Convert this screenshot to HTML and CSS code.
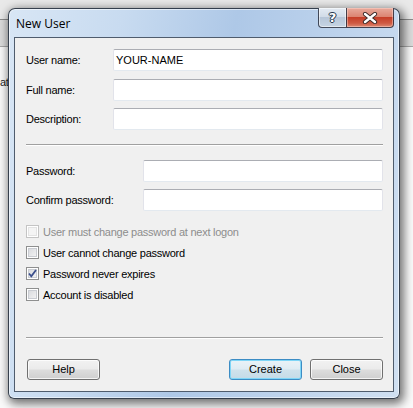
FILE: index.html
```html
<!DOCTYPE html>
<html>
<head>
<meta charset="utf-8">
<title>New User</title>
<link rel="stylesheet" href="styles.css">
</head>
<body>
<div class="desktop">
  <div class="backdrop"><span class="bg-text">at</span></div>
  <div class="dialog">
    <div class="titlebar">
      <span class="title">New User</span>
      <div class="caption-buttons">
        <div class="cap cap-help"><span class="q">?</span></div>
        <div class="cap cap-close">
          <svg width="16" height="12" viewBox="0 0 16 12">
            <path d="M3 2 L13 10 M13 2 L3 10" stroke="#3a2a28" stroke-width="4.2" stroke-linecap="round" fill="none"/>
            <path d="M3 2 L13 10 M13 2 L3 10" stroke="#ffffff" stroke-width="2.4" stroke-linecap="round" fill="none"/>
          </svg>
        </div>
      </div>
    </div>
    <div class="client">
      <div class="fields fields-top">
        <label class="lbl">User name:</label><div class="input">YOUR-NAME</div>
        <label class="lbl">Full name:</label><div class="input"></div>
        <label class="lbl">Description:</label><div class="input"></div>
      </div>
      <div class="sep sep-mid"></div>
      <div class="fields fields-pw">
        <label class="lbl">Password:</label><div class="input"></div>
        <label class="lbl">Confirm password:</label><div class="input"></div>
      </div>
      <div class="checks">
        <div class="check disabled"><span class="box"></span><span>User must change password at next logon</span></div>
        <div class="check"><span class="box"></span><span>User cannot change password</span></div>
        <div class="check"><span class="box checked"><svg width="9" height="9" viewBox="0 0 9 9"><path d="M1 4.5 L3.3 7.3 L8 1" stroke="#3b4f8c" stroke-width="1.8" fill="none"/></svg></span><span>Password never expires</span></div>
        <div class="check"><span class="box"></span><span>Account is disabled</span></div>
      </div>
      <div class="footer">
        <div class="sep"></div>
        <div class="buttons">
          <div class="btn btn-help">Help</div>
          <div class="btn btn-create">Create</div>
          <div class="btn btn-close">Close</div>
        </div>
      </div>
    </div>
  </div>
</div>
</body>
</html>
```

FILE: styles.css
```css
* { box-sizing: border-box; }
html, body { margin: 0; padding: 0; }
body {
  width: 413px;
  height: 408px;
  overflow: hidden;
  font-family: "Liberation Sans", Arial, sans-serif;
  font-size: 11px;
  letter-spacing: -0.25px;
  color: #000;
}
.desktop {
  position: relative;
  width: 413px;
  height: 408px;
  background: #fbfbfb;
}
.backdrop {
  position: absolute;
  left: 0; top: 0; right: 0; bottom: 0;
  background:
    linear-gradient(to bottom,
      #e9e9e9 0, #e9e9e9 19px,
      #8c8c8c 19px, #8c8c8c 20px,
      #dcdcdc 20px, #dcdcdc 46px,
      #a8a8a8 46px, #a8a8a8 47px,
      #fafafa 47px, #fafafa 100%);
}
.bg-text {
  position: absolute;
  left: 0;
  top: 76px;
  font-size: 11px;
  color: #222;
}
.dialog {
  position: absolute;
  left: 8px;
  top: 8px;
  width: 392px;
  height: 391px;
  border: 1px solid rgba(28, 36, 48, 0.85);
  border-radius: 7px 7px 6px 6px;
  background: linear-gradient(100deg, #d8e6f5 0%, #c8dbf0 25%, #aec8e7 50%, #bcd2ec 72%, #d0e0f2 100%);
  box-shadow: inset 0 0 0 1px rgba(255,255,255,0.55), 2px 3px 10px 2px rgba(0,0,0,0.55);
  display: flex;
  flex-direction: column;
  padding: 0 5px 6px 5px;
}
.titlebar {
  height: 28px;
  display: flex;
  align-items: flex-start;
  flex: none;
}
.title {
  font-family: "Open Sans", "Noto Sans", sans-serif;
  font-size: 12px;
  letter-spacing: 0;
  line-height: 12px;
  padding-left: 2px;
  padding-top: 9px;
  color: #000;
}
.caption-buttons {
  margin-left: auto;
  margin-top: -1px;
  margin-right: 0;
  display: flex;
}
.cap {
  height: 20px;
  display: flex;
  align-items: center;
  justify-content: center;
  border: 1px solid rgba(40, 48, 64, 0.85);
  border-top: none;
}
.cap-help {
  width: 28px;
  border-right: none;
  border-radius: 0 0 0 4px;
  background: linear-gradient(#e4ebf3 0%, #d2dce8 45%, #b7c6d8 50%, #c6d4e3 100%);
  box-shadow: inset 0 0 0 1px rgba(255,255,255,0.5);
}
.q {
  font-family: "DejaVu Sans", sans-serif;
  font-weight: bold;
  font-size: 13px;
  color: #fff;
  line-height: 13px;
  text-shadow: 0 0 1px #2c3a4e, 0 0 1px #2c3a4e, 1px 0 0 #2c3a4e, -1px 0 0 #2c3a4e, 0 1px 0 #2c3a4e, 0 -1px 0 #2c3a4e;
}
.cap-close {
  width: 48px;
  border-radius: 0 0 4px 0;
  background: linear-gradient(#e8aa9c 0%, #dc8572 45%, #c63f28 50%, #cf5a43 80%, #dc8a74 100%);
  box-shadow: inset 0 0 0 1px rgba(255,220,210,0.45);
}
.client {
  flex: 1;
  background: #f0f0f0;
  border: 1px solid #4f5c6d;
  display: flex;
  flex-direction: column;
  padding: 11px 10px 11px 11px;
}
.fields {
  display: grid;
  align-items: center;
}
.fields-top {
  grid-template-columns: 87px 1fr;
  grid-template-rows: 23px 22px 22px;
  row-gap: 7px;
}
.fields-top .input { align-self: start; }
.fields-top .lbl:first-child { align-self: start; line-height: 22px; }
.fields-pw {
  grid-template-columns: 117px 1fr;
  grid-template-rows: 22px 22px;
  row-gap: 7px;
}
.lbl { line-height: 22px; }
.input {
  height: 22px;
  background: #fff;
  border: 1px solid #e2e3ea;
  border-top-color: #abadb3;
  border-bottom-color: #e3e9ef;
  border-radius: 2px;
  padding-left: 2px;
  line-height: 20px;
  font-size: 11px;
  letter-spacing: 0;
}
.sep {
  height: 2px;
  border-top: 1px solid #a0a0a0;
  border-bottom: 1px solid #ffffff;
}
.sep-mid { margin: 14px 0; }
.checks {
  margin-top: 10px;
  display: flex;
  flex-direction: column;
}
.check {
  height: 21px;
  display: flex;
  align-items: center;
  gap: 4px;
}
.check.disabled { color: #8d8d8d; }
.box {
  width: 13px;
  height: 13px;
  border: 1px solid #8e8f8f;
  background: #f4f4f4;
  box-shadow: inset 0 0 0 1px #fff, inset 0 0 0 2px #c9ccd2;
  background-image: linear-gradient(135deg, #d4d6da 0%, #f7f7f7 100%);
  display: flex;
  align-items: center;
  justify-content: center;
  flex: none;
}
.check.disabled .box {
  border-color: #c4c4c4;
  background-image: none;
  background: #f4f4f4;
  box-shadow: inset 0 0 0 1px #fff, inset 0 0 0 2px #e3e3e3;
}
.footer {
  margin-top: auto;
}
.buttons {
  margin-top: 20px;
  display: flex;
}
.btn {
  width: 73px;
  height: 21px;
  border: 1px solid #707070;
  border-radius: 3px;
  background: linear-gradient(#f2f2f2 0%, #ebebeb 48%, #dddddd 52%, #cfcfcf 100%);
  box-shadow: inset 0 0 0 1px rgba(255,255,255,0.75);
  text-align: center;
  line-height: 19px;
  font-size: 11px;
  letter-spacing: 0;
}
.btn-help { margin-left: 1px; }
.btn-create {
  margin-left: auto;
  border-color: #3c8cc4;
  background: linear-gradient(#eaf3f8 0%, #dfecf3 48%, #cfe2ec 52%, #c4dbe7 100%);
  box-shadow: inset 0 0 0 1px #7fd6f7;
}
.btn-close { margin-left: 8px; margin-right: 0; }
```
